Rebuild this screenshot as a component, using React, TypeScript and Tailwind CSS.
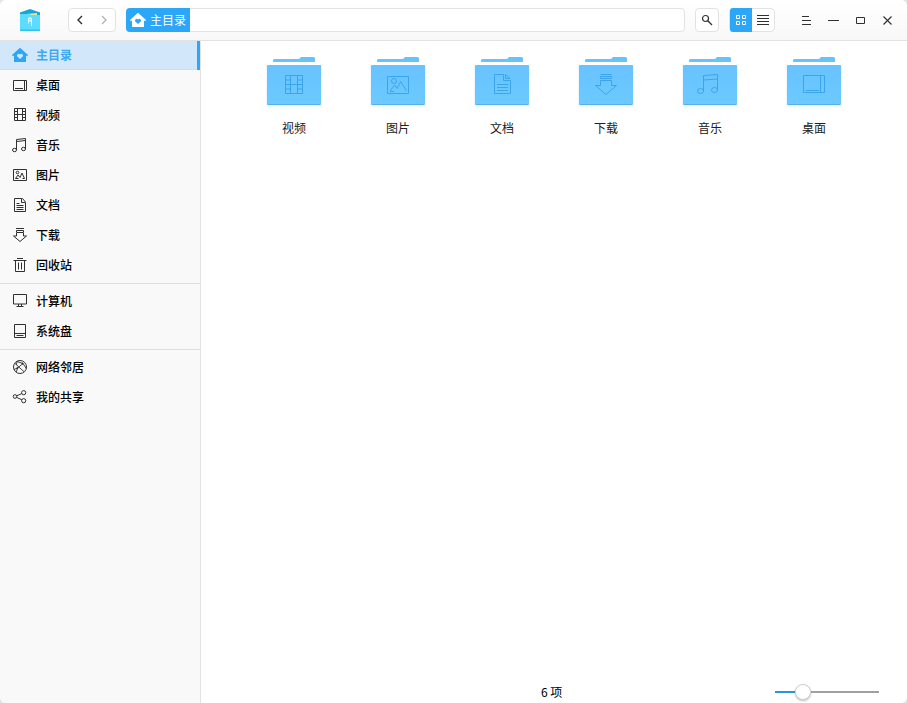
import React from "react";

type IconName =
  | "home" | "desktop" | "video" | "music" | "picture" | "document"
  | "download" | "trash" | "computer" | "disk" | "network" | "share";

const heart = "M8 12 5.300 9.500a1.600 1.600 0 0 1 2.700-2 1.600 1.600 0 0 1 2.700 2Z";

function HomeGlyph({ fill, hole }: { fill: string; hole: string }) {
  return (
    <svg width="16" height="16" viewBox="0 0 16 16" className="shrink-0">
      <path d="M8 .8 16 8v.8h-2V15H2V8.800H0V8Z" fill={fill} />
      <path d={heart} fill={hole} />
    </svg>
  );
}

const glyphs: Record<Exclude<IconName, "home">, React.ReactNode> = {
  desktop: <path d="M1.500 3.500h13v10h-13ZM12.500 3.500v10M3 11.500h8" />,
  video: <path d="M2.500 1.500h11v12h-11ZM5.500 1.500v12M10.500 1.500v12M5.500 7.500h5M2.500 4.500h3M2.500 7.500h3M2.500 10.500h3M10.500 4.500h3M10.500 7.500h3M10.500 10.500h3" />,
  music: (
    <>
      <path d="M4.500 13V2.500l9-1V12M4.500 4.500l9-1" />
      <ellipse cx="2.500" cy="13" rx="2" ry="1.700" />
      <ellipse cx="11.500" cy="12" rx="2" ry="1.700" />
    </>
  ),
  picture: (
    <>
      <path d="M1.500 2.500h13v11h-13ZM3.500 11.500 6 8l2 2.500 2-4.500 2.500 5.500M3.500 11.500h3M10.500 11.500h2" />
      <circle cx="5.500" cy="5.500" r="1.300" />
    </>
  ),
  document: <path d="M2.500 1.500h7v4h4v9h-11ZM10.500 1.500l3 3.500M9.500 1.500h1M4.500 6.500h3M4.500 8.500h7M4.500 10.500h7M4.500 12.500h7" />,
  download: <path d="M4 1.500h8M4.500 3.500h7v2h-7ZM4.500 6v3h-3L8 14.500 14.500 9h-3V6" />,
  trash: <path d="M1.500 3.500h13M5 1.500h6M3.500 3.500v11h9v-11M6.500 5.500v7M9.500 5.500v7" />,
  computer: <path d="M1.500 1.500h13v9.500h-13ZM6.500 11v2.500M9.500 11v2.500M4.500 13.500h7" />,
  disk: <path d="M2.500 1.500h11v13h-11ZM2.500 10.500h11M4.500 12.500h7" />,
  network: (
    <>
      <circle cx="8" cy="8" r="6.500" />
      <path d="M3 4.500 12 12.700M5 2.500l6 2 3.300 5M11 4.500 5.500 9l-1.200 4M2 10.500l3.500-1.500M5 2.500l-.5 3.500" strokeWidth=".9" />
      <circle cx="10.500" cy="4.500" r=".6" fill="#303030" />
      <circle cx="5.500" cy="9" r=".6" fill="#303030" />
    </>
  ),
  share: (
    <>
      <circle cx="3" cy="7.500" r="1.800" />
      <circle cx="11.700" cy="3.700" r="2.100" />
      <circle cx="11.700" cy="11.700" r="2.100" />
      <path d="m4.700 6.800 5.100-2.200M4.700 8.400l5.200 2.400" />
    </>
  ),
};

function SideIcon({ name }: { name: IconName }) {
  if (name === "home") return <HomeGlyph fill="#2ca7f8" hole="#d2e8fa" />;
  return (
    <svg width="16" height="16" viewBox="0 0 16 16" fill="none" stroke="#303030" className="shrink-0">
      {glyphs[name]}
    </svg>
  );
}

const groups: { icon: IconName; label: string }[][] = [
  [
    { icon: "home", label: "主目录" },
    { icon: "desktop", label: "桌面" },
    { icon: "video", label: "视频" },
    { icon: "music", label: "音乐" },
    { icon: "picture", label: "图片" },
    { icon: "document", label: "文档" },
    { icon: "download", label: "下载" },
    { icon: "trash", label: "回收站" },
  ],
  [
    { icon: "computer", label: "计算机" },
    { icon: "disk", label: "系统盘" },
  ],
  [
    { icon: "network", label: "网络邻居" },
    { icon: "share", label: "我的共享" },
  ],
];

const folders: { label: string; emblem: React.ReactNode }[] = [
  {
    label: "视频",
    emblem: <path d="M23.500 25.500h17v18h-17ZM28.500 25.500v18M35.500 25.500v18M28.500 34.500h7M23.500 30h5M23.500 34.500h5M23.500 39h5M35.500 30h5M35.500 34.500h5M35.500 39h5" />,
  },
  {
    label: "图片",
    emblem: (
      <>
        <path d="M21.500 26.500h21v17h-21ZM24 41l4.700-6 2.500 3.500 3.500-7L40.500 41M24 41.500h4" />
        <circle cx="28" cy="31" r="2.500" />
      </>
    ),
  },
  {
    label: "文档",
    emblem: <path d="M24.500 24.500h9v6h7v13h-16ZM35.500 24.500v4h4.500ZM27 34.500h11M27 37.500h11M27 40.500h11" />,
  },
  {
    label: "下载",
    emblem: <path d="M26.500 24.500h11M26.500 26.500h11v2h-11ZM26.500 30.500h11v5h5L32 44.500l-10.500-9h5Z" />,
  },
  {
    label: "音乐",
    emblem: (
      <>
        <path d="M25.500 41V25.500l14-1V40M25.500 30l14-1" />
        <ellipse cx="22.500" cy="41" rx="3" ry="2.500" />
        <ellipse cx="36.500" cy="40" rx="3" ry="2.500" />
      </>
    ),
  },
  {
    label: "桌面",
    emblem: <path d="M21.500 25.500h21v17h-21ZM38.500 25.500v17M23.500 40.500H37" />,
  },
];

function Folder({ label, emblem }: { label: string; emblem: React.ReactNode }) {
  return (
    <div className="flex w-[104px] flex-col items-center">
      <svg width="64" height="60" viewBox="0 0 64 60" fill="none">
        <defs>
          <linearGradient id="folderBody" x1="0" y1="0" x2="0" y2="1">
            <stop offset="0" stopColor="#68c2ff" />
            <stop offset="1" stopColor="#6ccaff" />
          </linearGradient>
        </defs>
        <path d="M11 12v-1.500q0-1.500 1.500-1.500H37l2-2h12.500q1.500 0 1.500 1.500V12Z" fill="#68c2fc" />
        <rect x="4" y="15" width="56" height="42" rx="2" fill="#68b8f0" opacity=".13" />
        <rect x="5" y="15" width="54" height="40" rx="1.500" fill="#57aee8" />
        <rect x="5" y="15" width="54" height="39" rx="1.500" fill="url(#folderBody)" />
        <g stroke="#36a2ea" strokeWidth=".9">{emblem}</g>
      </svg>
      <span className="mt-2 text-xs leading-5">{label}</span>
    </div>
  );
}

function Sidebar() {
  return (
    <nav className="w-[201px] shrink-0 border-r border-[#e3e3e3] bg-[#f9f9f9] text-xs font-medium text-black">
      {groups.map((items, g) => (
        <div key={g} className={g ? "mt-[3px] border-t border-[#dedede] pt-[2px]" : ""}>
          {items.map(({ icon, label }) =>
            icon === "home" ? (
              <div key={icon} className="flex h-[29px] items-center gap-2 border-r-[3px] border-[#2ca7f8] bg-[#d2e8fa] pb-px pl-3 font-bold text-[#3fa9f0] shadow-[inset_0_-1px_#c9e0f2]">
                <SideIcon name={icon} />
                {label}
              </div>
            ) : (
              <div key={icon} className="flex h-[30px] items-center gap-2 pl-3">
                <SideIcon name={icon} />
                {label}
              </div>
            )
          )}
        </div>
      ))}
    </nav>
  );
}

function Header() {
  return (
    <header className="flex h-[41px] shrink-0 items-center border-b border-[#e2e2e2] bg-linear-to-b from-white to-[#f8f8f8]">
      <svg width="20" height="22" viewBox="0 0 20 22" className="ml-5">
        <path d="M0 3.500 10 0l10 3.500V8H0Z" fill="#14a6d8" />
        <path d="M1 5.500 17 4v3H1Z" fill="#f2e58c" />
        <path d="M0 5h10l1 1h9v15q0 1-1 1H1q-1 0-1-1Z" fill="#5cdcff" />
        <path d="M0 20.500h20v.5q0 1-1 1H1q-1 0-1-1Z" fill="#35bfe9" />
        <path d="M8.500 14.500v-3M11.500 17v-5.500" stroke="#e9fbff" fill="none" />
        <circle cx="10" cy="10.500" r="1.500" fill="none" stroke="#e9fbff" strokeWidth="1.300" />
      </svg>
      <div className="ml-7 flex h-6 w-12 items-center rounded border border-[#e2e2e2] bg-white pl-[7px]">
        <svg width="8" height="10" viewBox="0 0 8 10" fill="none" stroke="#303030" strokeWidth="1.400"><path d="M6 1 2 5l4 4" /></svg>
        <svg width="8" height="10" viewBox="0 0 8 10" fill="none" stroke="#b4b4b4" strokeWidth="1.400" className="ml-4"><path d="m2 1 4 4-4 4" /></svg>
      </div>
      <div className="ml-[10px] flex h-6 w-[559px] rounded border border-[#e2e2e2] bg-white">
        <div className="-my-px -ml-px flex w-16 items-center gap-1 rounded-l bg-[#2ca7f8] pl-1 text-xs text-white">
          <HomeGlyph fill="#ffffff" hole="#2ca7f8" />
          <span className="whitespace-nowrap">主目录</span>
        </div>
      </div>
      <div className="ml-[10px] flex h-6 w-6 items-center justify-center rounded border border-[#e2e2e2] bg-white">
        <svg width="12" height="12" viewBox="0 0 12 12" fill="none" stroke="#303030"><circle cx="4.500" cy="4.500" r="3" strokeWidth="1.200" /><path d="m6.800 6.800 4.200 4.200" strokeWidth="1.300" /></svg>
      </div>
      <div className="ml-[10px] flex h-6 w-[46px] rounded border border-[#e2e2e2] bg-white">
        <div className="-my-px flex w-[22px] items-center justify-center rounded-l-[3px] bg-[#2ca7f8]">
          <svg width="10" height="10" viewBox="0 0 10 10" fill="none" stroke="#fff"><path d="M.5.5h3v3h-3ZM6.500.5h3v3h-3ZM.5 6.500h3v3h-3ZM6.500 6.500h3v3h-3Z" /></svg>
        </div>
        <div className="flex flex-1 items-center justify-center">
          <svg width="12" height="10" viewBox="0 0 12 10" stroke="#303030"><path d="M0 .5h12M0 3.500h12M0 6.500h12M0 9.500h12" /></svg>
        </div>
      </div>
      <svg width="110" height="20" viewBox="0 0 110 20" fill="none" stroke="#303030" className="ml-[22px]">
        <path d="M5 6.500h7M5 10.500h9M5 14.500h9M31 10.500h11M59.500 7.500h8v6h-8Z" />
        <path d="m86.500 6.500 8 8m0-8-8 8" strokeWidth="1.100" />
      </svg>
    </header>
  );
}

export default function App() {
  return (
    <div className="h-[703px] w-[907px] bg-[#e4e4e4] font-['Noto_Sans_CJK_SC',sans-serif]">
      <div className="flex h-full flex-col overflow-hidden rounded-md bg-white">
        <Header />
        <div className="flex min-h-0 flex-1">
          <Sidebar />
          <main className="flex flex-1 flex-col text-[#202020]">
            <div className="flex flex-1 items-start pt-[9px] pl-[41px]">
              {folders.map((f) => <Folder key={f.label} {...f} />)}
            </div>
            <footer className="flex h-[22px] items-center pr-7 pl-[340px] text-xs text-black">
              <span className="whitespace-nowrap">6 项</span>
              <div className="ml-auto flex w-[104px] items-center">
                <div className="h-[2px] w-5 bg-[#2b96d5]" />
                <div className="h-4 w-4 shrink-0 rounded-full border border-[#d0d0d0] bg-white shadow-[0_1px_2px_#0004]" />
                <div className="h-[2px] flex-1 bg-[#a0a0a0]" />
              </div>
            </footer>
          </main>
        </div>
      </div>
    </div>
  );
}
